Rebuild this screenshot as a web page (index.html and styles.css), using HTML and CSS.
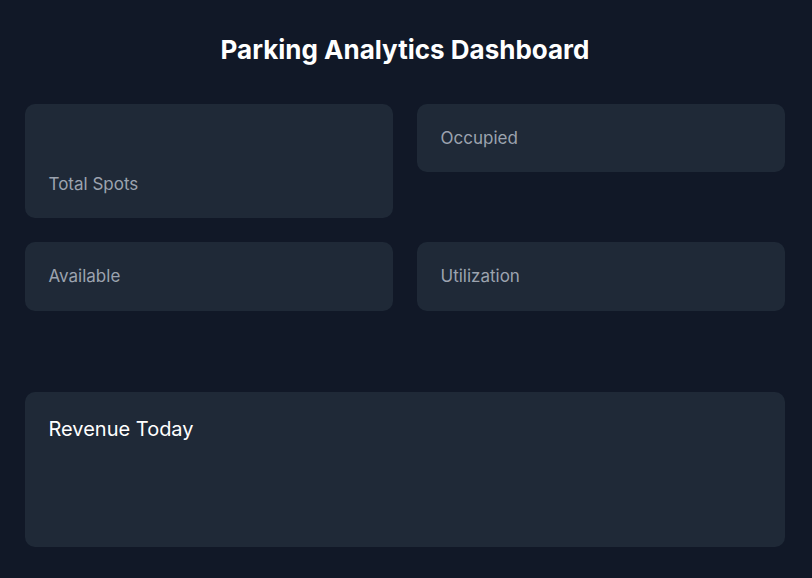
FILE: index.html
```html
<!DOCTYPE html>
<html lang="en">
<head>
<meta charset="utf-8">
<title>Parking Analytics Dashboard</title>
<link rel="stylesheet" href="styles.css">
</head>
<body>
<main class="dashboard">
  <h1 class="title">Parking Analytics Dashboard</h1>
  <section class="stats">
    <div class="card">
      <div class="card-value"></div>
      <div class="card-label">Total Spots</div>
    </div>
    <div class="card">
      <div class="card-label">Occupied</div>
    </div>
    <div class="card">
      <div class="card-label">Available</div>
    </div>
    <div class="card">
      <div class="card-label">Utilization</div>
    </div>
  </section>
  <div class="spacer"></div>
  <section class="card revenue">
    <h2 class="revenue-title">Revenue Today</h2>
  </section>
</main>
</body>
</html>
```
FILE: styles.css
```css
* { box-sizing: border-box; }
html, body {
  margin: 0;
  padding: 0;
  background: #111827;
  height: 100%;
}
body {
  font-family: Inter, "Noto Sans", sans-serif;
  color: #ffffff;
}
.dashboard {
  width: 760px;
  margin-left: 25px;
  padding-top: 33px;
}
.title {
  margin: 0 0 37px;
  text-align: center;
  font-size: 26px;
  line-height: 34px;
  font-weight: 700;
}
.stats {
  display: grid;
  grid-template-columns: 1fr 1fr;
  gap: 24px;
  align-items: start;
}
.card {
  background: #1f2937;
  border-radius: 10px;
  padding: 24px 24px 24px 23.5px;
}
.card-value {
  height: 46px;
}
.card-label {
  font-size: 17px;
  line-height: 20.4px;
  color: #9ca3af;
}
.spacer {
  height: 81.5px;
}
.revenue {
  height: 154.5px;
}
.revenue-title {
  margin: 0;
  font-size: 20px;
  line-height: 26px;
  font-weight: 400;
}
```
